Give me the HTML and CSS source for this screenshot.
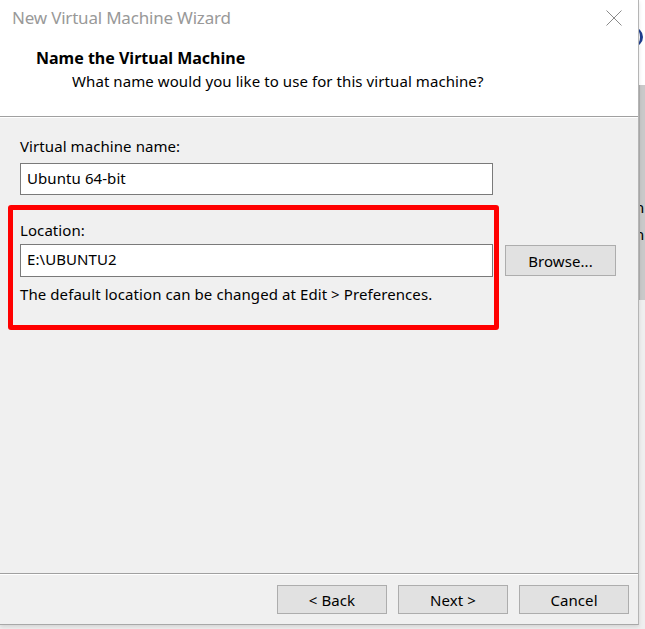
FILE: index.html
```html
<!DOCTYPE html>
<html>
<head>
<meta charset="utf-8">
<link rel="stylesheet" href="styles.css">
</head>
<body>
<div class="desk">
  <div class="dialog">
    <div class="header">
      <div class="titlebar">
        <span class="title">New Virtual Machine Wizard</span>
        <svg class="close" width="16" height="16" viewBox="0 0 16 16"><path d="M0.5 0.5 L15.5 15.5 M15.5 0.5 L0.5 15.5" stroke="#8a8a8a" stroke-width="1" fill="none"/></svg>
      </div>
      <div class="heading">Name the Virtual Machine</div>
      <div class="subheading">What name would you like to use for this virtual machine?</div>
    </div>
    <div class="content">
      <div class="label first">Virtual machine name:</div>
      <div class="field">Ubuntu 64-bit</div>
      <div class="location">
        <div class="label">Location:</div>
        <div class="row">
          <div class="field loc">E:\UBUNTU2</div>
          <div class="btn browse">Browse...</div>
        </div>
        <div class="note">The default location can be changed at Edit &gt; Preferences.</div>
        <div class="highlight"></div>
      </div>
    </div>
    <div class="footer">
      <div class="btn">&lt; Back</div>
      <div class="btn">Next &gt;</div>
      <div class="btn">Cancel</div>
    </div>
  </div>
  <div class="behind">
    <div class="behind-top"><span class="arc"></span></div>
    <div class="behind-mid"><span class="ch1">n</span><span class="ch2">n</span></div>
    <div class="behind-bot"></div>
  </div>
</div>
</body>
</html>
```
FILE: styles.css
```css
* { box-sizing: border-box; }
html, body { margin: 0; padding: 0; }
body {
  width: 645px;
  height: 629px;
  overflow: hidden;
  background: #f0f0f0;
  font-family: "Noto Sans", "Open Sans", sans-serif;
  font-size: 15px;
  letter-spacing: 0.08px;
  color: #000;
}
.desk {
  display: flex;
  height: 629px;
}
.dialog {
  width: 639px;
  height: 625px;
  flex: none;
  display: flex;
  flex-direction: column;
  background: #f0f0f0;
  border-right: 1px solid #b5b5b5;
  border-bottom: 1px solid #a8a8a8;
  box-shadow: 0 2px 4px rgba(0,0,0,0.12);
  position: relative;
  z-index: 1;
}
.header {
  height: 117px;
  background: #fff;
  border-bottom: 1px solid #a0a0a0;
  flex: none;
}
.titlebar {
  height: 42px;
  display: flex;
  align-items: flex-start;
  justify-content: space-between;
  padding: 6px 16px 0 12px;
}
.title {
  font-size: 17px;
  color: #999;
  letter-spacing: -0.2px;
}
.close { margin-top: 4px; }
.heading {
  font-weight: bold;
  font-size: 16px;
  letter-spacing: 0;
  padding-left: 36px;
  line-height: 20px;
  margin-top: 6px;
}
.subheading {
  padding-left: 72px;
  line-height: 20px;
  margin-top: 3px;
}
.content {
  flex: 1;
  padding: 18px 0 0 20px;
  border-top: 1px solid #fff;
}
.label { line-height: 20px; }
.field {
  width: 473px;
  height: 32px;
  background: #fff;
  border: 1px solid #7a7a7a;
  padding: 0 6px;
  line-height: 28px;
  margin-top: 7px;
}
.location {
  position: relative;
  margin-top: 25px;
}
.row {
  display: flex;
  align-items: center;
  gap: 12px;
  margin-top: 4px;
}
.field.loc { height: 33px; margin-top: 0; line-height: 29px; }
.btn {
  width: 110px;
  height: 29px;
  background: #e1e1e1;
  border: 1px solid #adadad;
  display: flex;
  align-items: center;
  justify-content: center;
  line-height: 20px;
}
.btn.browse { width: 111px; height: 31px; }
.note {
  line-height: 20px;
  margin-top: 7px;
}
.highlight {
  position: absolute;
  left: -12px;
  top: -15px;
  width: 491px;
  height: 125px;
  border: 5px solid #ff0000;
  border-radius: 3px;
}
.footer {
  height: 51px;
  flex: none;
  border-top: 1px solid #a0a0a0;
  box-shadow: inset 0 1px 0 #fff;
  display: flex;
  justify-content: flex-end;
  align-items: flex-start;
  gap: 11px;
  padding: 11px 9px 0 0;
}
.behind {
  width: 6px;
  flex: none;
  display: flex;
  flex-direction: column;
}
.behind-top {
  height: 85px;
  background: #fff;
  position: relative;
  overflow: hidden;
}
.arc {
  position: absolute;
  left: -6px;
  top: 27px;
  width: 10px;
  height: 20px;
  border-right: 3px solid #1f3f8f;
  border-radius: 0 10px 10px 0;
}
.behind-mid {
  height: 215px;
  background: #c9c9c9;
  position: relative;
  overflow: hidden;
  border-left: 1px solid #b0b0b0;
}
.ch1, .ch2 {
  position: absolute;
  left: -5px;
  font-size: 15px;
  color: #000;
  line-height: 18px;
}
.ch1 { top: 113px; }
.ch2 { top: 140px; }
.behind-bot {
  flex: 1;
  background: #efefef;
}
```
